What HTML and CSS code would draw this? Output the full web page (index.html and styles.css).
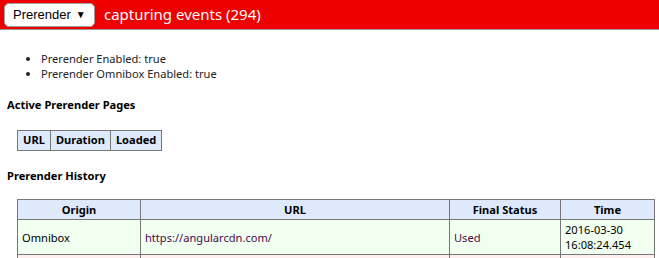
FILE: index.html
```html
<!DOCTYPE html>
<html>
<head>
<meta charset="utf-8">
<link rel="stylesheet" href="styles.css">
</head>
<body>
<div class="topbar">
  <div class="dropdown">Prerender <span class="arrow">&#9660;</span></div>
  <div class="status">capturing events (294)</div>
</div>
<div class="content">
  <ul class="flags">
    <li>Prerender Enabled: true</li>
    <li>Prerender Omnibox Enabled: true</li>
  </ul>
  <h4 class="section first">Active Prerender Pages</h4>
  <table class="grid small">
    <tr><th>URL</th><th>Duration</th><th>Loaded</th></tr>
  </table>
  <h4 class="section second">Prerender History</h4>
  <table class="grid history">
    <tr><th class="c-origin">Origin</th><th class="c-url">URL</th><th class="c-status">Final Status</th><th class="c-time">Time</th></tr>
    <tr class="ok"><td>Omnibox</td><td class="link">https://angularcdn.com/</td><td class="link">Used</td><td>2016-03-30<br>16:08:24.454</td></tr>
    <tr class="bad"><td>&nbsp;</td><td></td><td></td><td></td></tr>
  </table>
</div>
</body>
</html>
```
FILE: styles.css
```css
html, body {
  margin: 0;
  padding: 0;
  background: #fff;
  font-family: "Noto Sans", "Open Sans", sans-serif;
  font-size: 11.1px;
  color: #222;
  overflow: hidden;
}
.topbar {
  display: flex;
  align-items: center;
  height: 29px;
  background: #ee0000;
  border-bottom: 1px solid #9a9a9a;
  padding-left: 4px;
}
.dropdown {
  box-sizing: border-box;
  width: 91px;
  height: 24px;
  background: #fff;
  border: 1px solid #a0a0a0;
  border-radius: 5px;
  font-family: "Liberation Sans", Arial, sans-serif;
  font-size: 13px;
  color: #000;
  display: flex;
  align-items: center;
  padding-left: 8px;
}
.arrow {
  font-size: 10px;
  margin-left: 5px;
}
.status {
  color: #fff;
  font-size: 15px;
  margin-left: 9px;
  margin-top: -1px;
}
.content {
  padding-left: 7px;
  padding-top: 21px;
}
.flags {
  margin: 0;
  padding-left: 34px;
  line-height: 15px;
}
.section {
  font-size: 11.1px;
  font-weight: bold;
  line-height: 16px;
  color: #000;
}
.section.first {
  margin: 16px 0 17px 0;
}
.section.second {
  margin: 17px 0 15px 0;
}
.grid {
  border-collapse: collapse;
  margin-left: 10px;
  color: #000;
}
.grid th, .grid td {
  border: 1px solid #777;
  padding: 1px 5px;
  line-height: 16px;
}
.grid th {
  background: #dee9fc;
  font-weight: bold;
}
.small th {
  padding: 1px 5px 2px 5px;
}
.history {
  width: 638px;
}
.history th {
  padding: 2px 5px 1px 5px;
}
.history td {
  padding: 2px 4px;
  line-height: 15px;
}
.c-origin { width: 112px; }
.c-url { width: 298px; }
.c-status { width: 100px; }
.history tr.ok td { background: #f0fff0; }
.history tr.bad td { background: #fff0f0; }
.link { color: #4a0a4a; }
```
